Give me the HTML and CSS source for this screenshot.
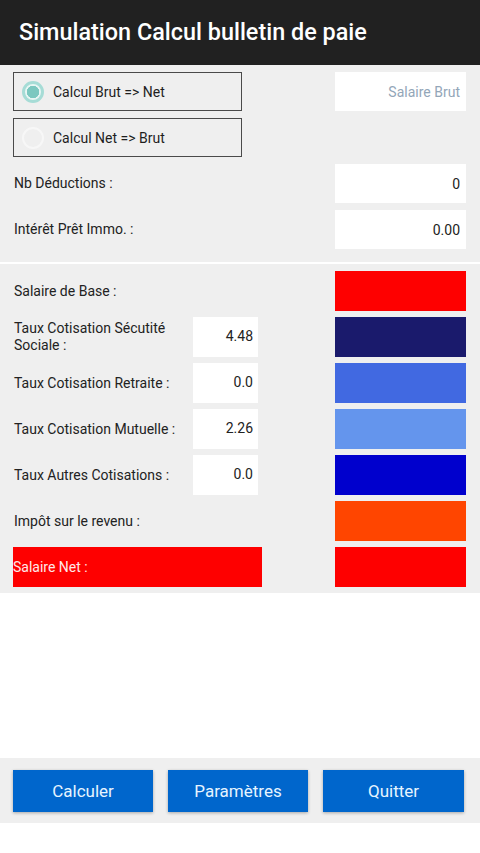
FILE: index.html
```html
<!DOCTYPE html>
<html lang="fr">
<head>
<meta charset="utf-8">
<title>Simulation Calcul bulletin de paie</title>
<link rel="stylesheet" href="styles.css">
</head>
<body>
<header class="appbar">Simulation Calcul bulletin de paie</header>
<main class="form">
  <section class="inputs">
    <div class="row">
      <label class="radio-box"><span class="radio checked"></span><span>Calcul Brut =&gt; Net</span></label>
      <div class="field hint">Salaire Brut</div>
    </div>
    <div class="row">
      <label class="radio-box"><span class="radio"></span><span>Calcul Net =&gt; Brut</span></label>
    </div>
    <div class="row">
      <span class="label">Nb Déductions :</span>
      <div class="field">0</div>
    </div>
    <div class="row">
      <span class="label">Intérêt Prêt Immo. :</span>
      <div class="field">0.00</div>
    </div>
  </section>
  <div class="sep"></div>
  <section class="results">
    <span class="label">Salaire de Base :</span>
    <span></span><span></span>
    <div class="swatch red"></div>

    <span class="label">Taux Cotisation Sécutité Sociale :</span>
    <div class="small-field">4.48</div><span></span>
    <div class="swatch navy"></div>

    <span class="label">Taux Cotisation Retraite :</span>
    <div class="small-field">0.0</div><span></span>
    <div class="swatch royal"></div>

    <span class="label">Taux Cotisation Mutuelle :</span>
    <div class="small-field">2.26</div><span></span>
    <div class="swatch cornflower"></div>

    <span class="label">Taux Autres Cotisations :</span>
    <div class="small-field">0.0</div><span></span>
    <div class="swatch medium"></div>

    <span class="label">Impôt sur le revenu :</span>
    <span></span><span></span>
    <div class="swatch orange"></div>

    <div class="net">Salaire Net :</div>
    <div class="swatch red"></div>
  </section>
</main>
<div class="spacer"></div>
<footer class="buttons">
  <button class="btn">Calculer</button>
  <button class="btn">Paramètres</button>
  <button class="btn">Quitter</button>
</footer>
</body>
</html>
```

FILE: styles.css
```css
* { box-sizing: border-box; }
html, body {
  margin: 0;
  padding: 0;
  background: #ffffff;
  font-family: Roboto, "Noto Sans", sans-serif;
  color: #222222;
}
.appbar {
  height: 65px;
  background: #212121;
  color: #ffffff;
  font-size: 23.4px;
  font-weight: 500;
  display: flex;
  align-items: center;
  padding-left: 19px;
  padding-bottom: 1px;
}
.form {
  background: #efefef;
}
.inputs {
  padding: 7px 14px 13px 13px;
  display: flex;
  flex-direction: column;
  gap: 7px;
}
.row {
  height: 39px;
  display: flex;
  align-items: center;
  justify-content: space-between;
}
.radio-box {
  width: 229px;
  height: 39px;
  border: 1px solid #4a4a4a;
  display: flex;
  align-items: center;
  gap: 9px;
  padding-left: 8px;
  font-size: 14px;
  color: #1e1e1e;
}
.radio {
  width: 22px;
  height: 22px;
  border-radius: 50%;
  border: 2px solid #f7f7f7;
  flex: none;
}
.radio.checked {
  border: 3px solid #a6dcd6;
  background: radial-gradient(circle, #7cc8c0 0 6px, #e8f6f4 6.5px 100%);
}
.label {
  font-size: 14px;
  color: #222222;
  line-height: 17px;
  padding-left: 1px;
}
.field {
  width: 131px;
  height: 39px;
  background: #ffffff;
  display: flex;
  align-items: center;
  justify-content: flex-end;
  padding-right: 6px;
  font-size: 14px;
  margin-left: auto;
}
.field.hint {
  color: #93a6b8;
}
.sep {
  height: 2px;
  background: #ffffff;
}
.results {
  display: grid;
  grid-template-columns: 180px 65px 1fr 131px;
  grid-auto-rows: 40px;
  row-gap: 6px;
  align-items: center;
  padding: 7px 14px 6px 13px;
}
.small-field {
  height: 40px;
  background: #ffffff;
  display: flex;
  align-items: center;
  justify-content: flex-end;
  padding-right: 5px;
  padding-bottom: 2px;
  font-size: 14px;
}
.swatch {
  height: 40px;
}
.red { background: #fe0000; }
.navy { background: #1a1a6c; }
.royal { background: #4169e1; }
.cornflower { background: #6495ed; }
.medium { background: #0000cd; }
.orange { background: #ff4500; }
.net {
  grid-column: 1 / 4;
  width: 249px;
  height: 40px;
  background: #fe0000;
  color: #ffe8e8;
  font-size: 14px;
  display: flex;
  align-items: center;
}
.spacer {
  height: 165px;
}
.buttons {
  background: #efefef;
  height: 65px;
  display: flex;
  gap: 15px;
  padding: 12px 16px 0 13px;
}
.btn {
  width: 140px;
  height: 42px;
  background: #0066cc;
  color: #e6f4ff;
  border: none;
  font-family: Roboto, "Noto Sans", sans-serif;
  font-size: 17px;
  box-shadow: 0 1px 3px rgba(0,0,0,0.3);
  padding: 0;
}
.btn:last-child { width: 141px; }
```
